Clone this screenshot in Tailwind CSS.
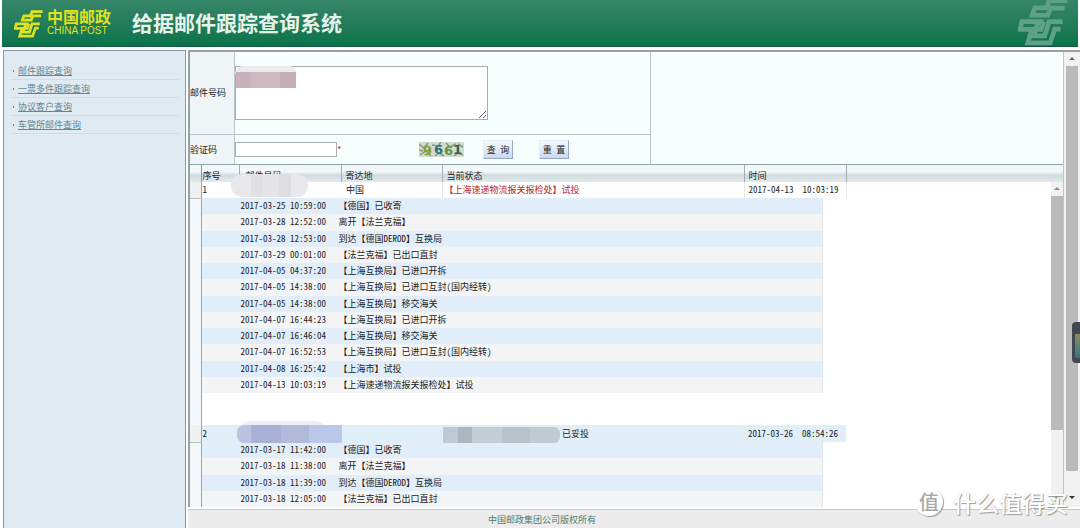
<!DOCTYPE html>
<html lang="zh-CN">
<head>
<meta charset="utf-8">
<meta name="viewport" content="width=device-width, initial-scale=1">
<title>给据邮件跟踪查询系统</title>
<script src="https://cdn.jsdelivr.net/npm/@tailwindcss/browser@4"></script>
</head>
<body class="relative flex h-screen flex-col overflow-hidden bg-white font-['Noto_Sans_CJK_SC',sans-serif] text-[9px] leading-3 text-[#222] [font-feature-settings:'hwid']">
<svg class="hidden" aria-hidden="true">
  <symbol id="post-mark" viewBox="0 0 148 140">
    <g fill="none" stroke="currentColor" stroke-width="14">
      <path d="M146 7H92L84 28H50L42 50H88L97 29H138"/>
      <path d="M76 69H12L6 92H68L76 69"/>
      <path d="M132 69H92L79 111H46L60 69"/>
      <path d="M126 91H109L95 132H29L41 92"/>
    </g>
  </symbol>
</svg>

<header class="relative mx-0.5 flex h-[47px] shrink-0 items-start overflow-hidden border-b border-[#17583c] bg-linear-to-b from-[#36866a] to-[#04734a]">
  <a href="#" class="ml-3 flex items-start gap-1 pt-2 text-[#dfe21e]">
    <svg class="mt-0.5 h-7 w-[29px]" aria-hidden="true"><use href="#post-mark"/></svg>
    <span class="block w-16">
      <span class="block text-[16px] leading-4 font-bold">中国邮政</span>
      <span class="block pt-px font-['Liberation_Sans',sans-serif] text-[10px] leading-3 whitespace-nowrap [font-feature-settings:normal]">CHINA POST</span>
    </span>
  </a>
  <h1 class="ml-[21px] pt-2.5 text-[21px] leading-6 font-bold text-[#e6f3ea]">给据邮件跟踪查询系统</h1>
  <svg class="absolute -top-0.5 right-2.5 h-12 w-[50px] text-[#5fa088]" aria-hidden="true"><use href="#post-mark"/></svg>
</header>

<div class="flex min-h-0 flex-1 gap-0.5 pt-[3px] pl-[3px]">
  <nav class="w-[183px] shrink-0 border-x border-t border-[#8499aa] bg-[#dfeaf3] px-1.5 pt-[11px] text-[#5f8894]">
    <ul>
      <li class="flex h-[18px] items-center gap-1 border-b border-[#cfdde6] pl-[3px]"><span class="h-0.5 w-px bg-[#5f8894]"></span><a href="#" class="underline">邮件跟踪查询</a></li>
      <li class="flex h-[18px] items-center gap-1 border-b border-[#cfdde6] pl-[3px]"><span class="h-0.5 w-px bg-[#5f8894]"></span><a href="#" class="underline">一票多件跟踪查询</a></li>
      <li class="flex h-[18px] items-center gap-1 border-b border-[#cfdde6] pl-[3px]"><span class="h-0.5 w-px bg-[#5f8894]"></span><a href="#" class="underline">协议客户查询</a></li>
      <li class="flex h-[18px] items-center gap-1 border-b border-[#cfdde6] pl-[3px]"><span class="h-0.5 w-px bg-[#5f8894]"></span><a href="#" class="underline">车管所邮件查询</a></li>
    </ul>
  </nav>

  <div class="flex min-w-0 flex-1 flex-col">
    <main class="flex min-h-0 flex-1 border-t-2 border-[#9b9fa1]">
      <div class="flex min-w-0 flex-1 flex-col border-r border-l-2 border-[#93a3ae] border-r-[#b4c8d0]">
        <form class="shrink-0 bg-[#f6fffe]">
          <div class="flex h-[83px] w-[461px] border-r border-b border-[#b9c6cc]">
            <label for="mailno" class="flex w-[45px] items-center border-r border-[#b9c6cc] bg-[#eff5f6]">邮件号码</label>
            <div class="relative pt-3.5">
              <textarea id="mailno" class="block h-[54px] w-[253px] border border-[#a9adaf] bg-white"></textarea>
              <div class="absolute top-[14px] left-0 h-2 w-[62px] rounded-t-lg bg-[#ebebee]"></div>
              <div class="absolute top-5 left-px flex h-4 w-[60px]">
                <span class="w-[15px] bg-[#c5b2bb]"></span><span class="flex-1 bg-[#cdbac1]"></span><span class="w-4 bg-[#c4adb4]"></span>
              </div>
            </div>
          </div>
          <div class="flex h-[29px] w-[461px] items-center border-r border-[#b9c6cc]">
            <label for="code" class="flex w-[45px] items-center self-stretch border-r border-[#b9c6cc] bg-[#eff5f6]">验证码</label>
            <input id="code" type="text" class="h-[15px] w-[102px] border border-[#a9adaf] bg-white">
            <span class="w-[82px] text-[#d0202c]">*</span>
            <svg class="h-[15px] w-[45px] bg-[#d3dad2]" viewBox="0 0 45 15" role="img" aria-label="9661">
              <g fill="none" stroke="#7f9a80" stroke-width="1.5">
                <path d="M0 2l5 4 4-5M1 13l6-4 5 5M13 3l6 1 3-4M27 1l4 4 6-3M35 14l4-3 5 2M16 14l4-3 5 3M39 2l5 3M0 8l4 1"/>
              </g>
              <g font-family="DejaVu Sans, sans-serif" font-weight="bold" font-size="13" style="font-feature-settings:normal">
                <text x="4" y="13" fill="#7fa130" transform="rotate(-6 8 8)">9</text>
                <text x="15" y="12" fill="#2d7377">6</text>
                <text x="25" y="13" fill="#5d9440">6</text>
                <text x="34" y="12" fill="#2f6344">1</text>
              </g>
            </svg>
            <button type="submit" class="ml-[19px] h-[19px] w-[30px] border border-t-[#e5ecf4] border-r-[#98a7c0] border-b-[#98a7c0] border-l-[#e5ecf4] bg-linear-to-b from-[#f5f9fd] to-[#cbd9ee] whitespace-pre">查 询</button>
            <button type="reset" class="ml-[26px] h-[19px] w-[30px] border border-t-[#e5ecf4] border-r-[#98a7c0] border-b-[#98a7c0] border-l-[#e5ecf4] bg-linear-to-b from-[#f5f9fd] to-[#cbd9ee] whitespace-pre">重 置</button>
          </div>
        </form>

        <div class="h-[18px] shrink-0 border-t border-[#8fa5a9] bg-linear-to-b from-[#f4f7f8] from-40% via-[#cfdbdf] via-60% to-[#e3eaed]">
          <table class="h-[17px] w-[656px] table-fixed border-collapse text-left">
            <thead>
              <tr class="align-bottom">
                <th class="w-[11px] border-r border-[#7f98ad] p-0"></th>
                <th class="w-[38px] border-r border-[#9fafb5] p-0 pl-px font-normal">序号</th>
                <th class="w-[102px] border-r border-[#9fafb5] p-0 pl-1.5 font-normal">邮件号码</th>
                <th class="w-[101px] border-r border-[#9fafb5] p-0 pl-1 font-normal">寄达地</th>
                <th class="w-[302px] border-r border-[#9fafb5] p-0 pl-1 font-normal">当前状态</th>
                <th class="w-[102px] border-r border-[#9fafb5] p-0 pl-1 font-normal">时间</th>
              </tr>
            </thead>
          </table>
        </div>

        <div class="flex min-h-0 flex-1 bg-white">
          <div class="min-w-0 flex-1">
            <table class="w-[656px] table-fixed border-collapse">
              <colgroup><col class="w-[11px]"><col class="w-[38px]"><col class="w-[102px]"><col class="w-[101px]"><col class="w-[302px]"><col class="w-[102px]"></colgroup>
              <tbody>
                <tr class="h-4">
                  <td class="border-r border-b border-r-[#8ba9c2] border-b-[#b9bfc4] bg-[#eef0f1] p-0"></td>
                  <td class="p-0 pl-px">1</td>
                  <td class="relative p-0">
                    <div class="absolute -top-2 -left-2 z-10 flex h-[23px] w-[77px] overflow-hidden rounded-xl bg-[#e8e8ea]">
                      <span class="ml-5 w-3 bg-[#e0e0e3]"></span><span class="w-4 bg-[#e5e5e7]"></span><span class="w-3 bg-[#dedee1]"></span>
                    </div>
                  </td>
                  <td class="border-r border-[#e3e7ea] p-0 pl-[5px]">中国</td>
                  <td class="border-r border-[#e3e7ea] p-0 pl-0.5 text-[#b81d24]">【上海速递物流报关报检处】试投</td>
                  <td class="border-r border-[#e3e7ea] p-0 pl-1 whitespace-pre">2017-04-13  10:03:19</td>
                </tr>
                <tr>
                  <td class="border-r border-[#8ba9c2] bg-[#f3f7f9] p-0"></td>
                  <td colspan="5" class="p-0 pb-8">
                    <table class="h-[195px] w-[621px] border-collapse">
                      <tbody class="[&>tr:nth-child(odd)]:bg-[#e1edf8] [&>tr:nth-child(even)]:bg-[#f2f4f5] [&>tr>td]:p-0 [&>tr>td:first-child]:w-[137px] [&>tr>td:first-child]:pl-[39px] [&>tr]:border-r [&>tr]:border-[#dfe6ea]">
                        <tr><td>2017-03-25 10:59:00</td><td>【德国】已收寄</td></tr>
                        <tr><td>2017-03-28 12:52:00</td><td>离开【法兰克福】</td></tr>
                        <tr><td>2017-03-28 12:53:00</td><td>到达【德国DEROD】互换局</td></tr>
                        <tr><td>2017-03-29 00:01:00</td><td>【法兰克福】已出口直封</td></tr>
                        <tr><td>2017-04-05 04:37:20</td><td>【上海互换局】已进口开拆</td></tr>
                        <tr><td>2017-04-05 14:38:00</td><td>【上海互换局】已进口互封(国内经转)</td></tr>
                        <tr><td>2017-04-05 14:38:00</td><td>【上海互换局】移交海关</td></tr>
                        <tr><td>2017-04-07 16:44:23</td><td>【上海互换局】已进口开拆</td></tr>
                        <tr><td>2017-04-07 16:46:04</td><td>【上海互换局】移交海关</td></tr>
                        <tr><td>2017-04-07 16:52:53</td><td>【上海互换局】已进口互封(国内经转)</td></tr>
                        <tr><td>2017-04-08 16:25:42</td><td>【上海市】试投</td></tr>
                        <tr><td>2017-04-13 10:03:19</td><td>【上海速递物流报关报检处】试投</td></tr>
                      </tbody>
                    </table>
                  </td>
                </tr>
                <tr class="h-[17px] bg-[#dfeef7]">
                  <td class="border-r border-b border-r-[#8ba9c2] border-b-[#b9bfc4] bg-[#eef0f1] p-0"></td>
                  <td class="p-0 pl-px">2</td>
                  <td class="relative p-0">
                    <div class="absolute -top-1 left-0 h-3 w-[88px] rounded-t-xl bg-[#eceef5]"></div>
                    <div class="absolute top-0 -left-0.5 z-10 flex h-[18px] w-[105px] overflow-hidden rounded-l-lg bg-[#b4c0e2]">
                      <span class="w-3.5 bg-[#bcc2df]"></span><span class="w-[30px] bg-[#a9b2d6]"></span><span class="w-7 bg-[#b2badb]"></span><span class="flex-1 bg-[#bac7ea]"></span>
                    </div>
                  </td>
                  <td class="relative p-0">
                    <div class="absolute top-0.5 left-[102px] z-10 flex h-4 w-[117px] overflow-hidden rounded-r-md bg-[#c1cad1]">
                      <span class="w-[15px] bg-[#bec9d1]"></span><span class="w-3.5 bg-[#abb7c0]"></span><span class="w-[30px] bg-[#c4cdd4]"></span><span class="w-7 bg-[#b9c3cb]"></span>
                    </div>
                  </td>
                  <td class="p-0 pl-[120px]">已妥投</td>
                  <td class="p-0 pl-1 whitespace-pre">2017-03-26  08:54:26</td>
                </tr>
                <tr>
                  <td class="border-r border-[#8ba9c2] bg-[#f3f7f9] p-0"></td>
                  <td colspan="5" class="p-0">
                    <table class="h-[65px] w-[621px] border-collapse">
                      <tbody class="[&>tr:nth-child(odd)]:bg-[#e1edf8] [&>tr:nth-child(even)]:bg-[#f2f4f5] [&>tr>td]:p-0 [&>tr>td:first-child]:w-[137px] [&>tr>td:first-child]:pl-[39px] [&>tr]:border-r [&>tr]:border-[#dfe6ea]">
                        <tr><td>2017-03-17 11:42:00</td><td>【德国】已收寄</td></tr>
                        <tr><td>2017-03-18 11:38:00</td><td>离开【法兰克福】</td></tr>
                        <tr><td>2017-03-18 11:39:00</td><td>到达【德国DEROD】互换局</td></tr>
                        <tr><td>2017-03-18 12:05:00</td><td>【法兰克福】已出口直封</td></tr>
                      </tbody>
                    </table>
                  </td>
                </tr>
              </tbody>
            </table>
          </div>
          <div class="flex w-3 flex-col items-center bg-[#f1f1f1]" aria-hidden="true">
            <svg class="h-3.5 w-3 shrink-0" viewBox="0 0 12 14"><path d="M3 8l3-3 3 3z" fill="#8a8a8a"/></svg>
            <div class="h-[72%] w-full bg-[#bababa]"></div>
            <svg class="mt-auto h-4 w-3 shrink-0" viewBox="0 0 12 16"><path d="M3 5h6l-3 3z" fill="#333"/></svg>
          </div>
        </div>
      </div>
      <div class="flex w-4 flex-col items-center bg-[#f1f1f1] px-0.5" aria-hidden="true">
        <svg class="h-3.5 w-3 shrink-0" viewBox="0 0 12 14"><path d="M3 8l3-3 3 3z" fill="#666"/></svg>
        <div class="h-[89%] w-full bg-[#bababa]"></div>
        <svg class="mt-auto h-4 w-3 shrink-0" viewBox="0 0 12 16"><path d="M3 5h6l-3 3z" fill="#333"/></svg>
      </div>
    </main>
    <footer class="mt-0.5 flex h-[19px] shrink-0 items-center border-t border-[#c8c8c8] bg-[#ececec] pt-0.5 pl-[300px] text-[#537c6c]">中国邮政集团公司版权所有</footer>
  </div>
</div>

<!-- Docked side tab -->
<div class="absolute top-[322px] right-0 h-[41px] w-2 rounded-l-sm bg-[#414852] pt-3 pl-[3px]" aria-hidden="true">
  <div class="h-6 bg-linear-to-b from-[#8a8a4c] to-[#2f7480]"></div>
</div>

<!-- Site watermark -->
<div class="absolute right-3 bottom-2.5 z-20 flex items-center gap-2.5 text-white [text-shadow:1px_1px_1px_#999,0_0_1px_#bbb]">
  <span class="flex size-7 items-center justify-center rounded-full bg-white text-[20px] leading-7 font-medium text-[#aaa] shadow-[1px_1px_1px_#999] [text-shadow:none]">值</span>
  <span class="text-[23px] leading-8 font-medium">什么值得买</span>
</div>
</body>
</html>
